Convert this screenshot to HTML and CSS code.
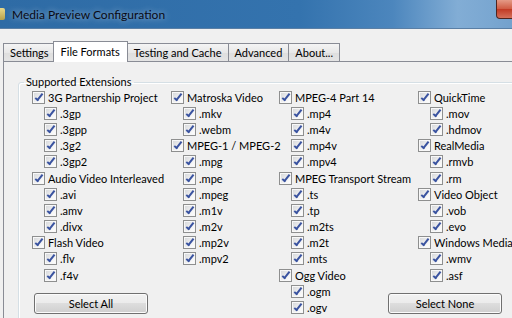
FILE: index.html
```html
<!DOCTYPE html>
<html lang="en">
<head>
  <meta charset="UTF-8">
  <title>Media Preview Configuration</title>
  <link rel="stylesheet" href="styles.css">
</head>
<body>

  <div class="window">
    <div class="titlebar">
      <span class="app-icon"></span>
      <span class="title">Media Preview Configuration</span>
      <span class="close"></span>
    </div>

    <div class="client">
      <div class="tabs">
        <div class="tab tab-settings">Settings</div>
        <div class="tab active">File Formats</div>
        <div class="tab">Testing and Cache</div>
        <div class="tab">Advanced</div>
        <div class="tab">About...</div>
      </div>

      <div class="panel">
        <fieldset class="group">
          <legend>Supported Extensions</legend>
          <div class="columns">
            <div class="col">
              <div class="item"><span class="box"></span>3G Partnership Project</div>
              <div class="item child"><span class="box"></span>.3gp</div>
              <div class="item child"><span class="box"></span>.3gpp</div>
              <div class="item child"><span class="box"></span>.3g2</div>
              <div class="item child"><span class="box"></span>.3gp2</div>
              <div class="item"><span class="box"></span>Audio Video Interleaved</div>
              <div class="item child"><span class="box"></span>.avi</div>
              <div class="item child"><span class="box"></span>.amv</div>
              <div class="item child"><span class="box"></span>.divx</div>
              <div class="item"><span class="box"></span>Flash Video</div>
              <div class="item child"><span class="box"></span>.flv</div>
              <div class="item child"><span class="box"></span>.f4v</div>
              <button class="btn btn-all">Select All</button>
            </div>
            <div class="col">
              <div class="item"><span class="box"></span>Matroska Video</div>
              <div class="item child"><span class="box"></span>.mkv</div>
              <div class="item child"><span class="box"></span>.webm</div>
              <div class="item"><span class="box"></span>MPEG-1 / MPEG-2</div>
              <div class="item child"><span class="box"></span>.mpg</div>
              <div class="item child"><span class="box"></span>.mpe</div>
              <div class="item child"><span class="box"></span>.mpeg</div>
              <div class="item child"><span class="box"></span>.m1v</div>
              <div class="item child"><span class="box"></span>.m2v</div>
              <div class="item child"><span class="box"></span>.mp2v</div>
              <div class="item child"><span class="box"></span>.mpv2</div>
            </div>
            <div class="col">
              <div class="item"><span class="box"></span>MPEG-4 Part 14</div>
              <div class="item child"><span class="box"></span>.mp4</div>
              <div class="item child"><span class="box"></span>.m4v</div>
              <div class="item child"><span class="box"></span>.mp4v</div>
              <div class="item child"><span class="box"></span>.mpv4</div>
              <div class="item"><span class="box"></span>MPEG Transport Stream</div>
              <div class="item child"><span class="box"></span>.ts</div>
              <div class="item child"><span class="box"></span>.tp</div>
              <div class="item child"><span class="box"></span>.m2ts</div>
              <div class="item child"><span class="box"></span>.m2t</div>
              <div class="item child"><span class="box"></span>.mts</div>
              <div class="item"><span class="box"></span>Ogg Video</div>
              <div class="item child"><span class="box"></span>.ogm</div>
              <div class="item child"><span class="box"></span>.ogv</div>
            </div>
            <div class="col">
              <div class="item"><span class="box"></span>QuickTime</div>
              <div class="item child"><span class="box"></span>.mov</div>
              <div class="item child"><span class="box"></span>.hdmov</div>
              <div class="item"><span class="box"></span>RealMedia</div>
              <div class="item child"><span class="box"></span>.rmvb</div>
              <div class="item child"><span class="box"></span>.rm</div>
              <div class="item"><span class="box"></span>Video Object</div>
              <div class="item child"><span class="box"></span>.vob</div>
              <div class="item child"><span class="box"></span>.evo</div>
              <div class="item"><span class="box"></span>Windows Media</div>
              <div class="item child"><span class="box"></span>.wmv</div>
              <div class="item child"><span class="box"></span>.asf</div>
              <button class="btn btn-none">Select None</button>
            </div>
          </div>
        </fieldset>
      </div>
    </div>
  </div>

</body>
</html>
```

FILE: styles.css
```css
body {
  margin: 0;
  overflow: hidden;
  background: #f0f0f0;
  font-family: Lato, "Open Sans", sans-serif;
  font-size: 11px;
  color: #000;
}
.window {
  width: 545px;
}
.titlebar {
  display: flex;
  align-items: center;
  height: 28px;
  border-bottom: 1px solid #5a7fa5;
  background: linear-gradient(90deg, #2e6ba5 0%, #3473ae 55%, #4c86bd 72%, #82add5 84%, #7aa7d1 90%, #6998c6 100%);
}
.app-icon {
  width: 16px;
  height: 12px;
  margin-left: -11px;
  border-radius: 2px;
  background: linear-gradient(#e9d98a, #b7a04a);
}
.title {
  margin-left: 7px;
  font-size: 12px;
  color: #0a0a14;
  text-shadow: 0 0 6px rgba(255, 255, 255, 0.6);
}
.close {
  align-self: flex-start;
  margin-left: auto;
  margin-right: 4px;
  width: 43px;
  height: 18px;
  border: 1px solid #4e2520;
  border-top: 0;
  border-radius: 0 0 4px 4px;
  background: linear-gradient(#e49a86, #cf5a42 50%, #c13a24 51%, #d5705a);
}
.client {
  padding-left: 3px;
}
.tabs {
  display: flex;
  align-items: flex-end;
  height: 20px;
  margin-top: 12px;
}
.tab {
  position: relative;
  height: 17px;
  line-height: 17px;
  padding: 0 6px;
  margin-right: -1px;
  border: 1px solid #898c95;
  border-bottom: 0;
  background: linear-gradient(#f4f4f4, #e8e8e8 50%, #dedede 51%, #e4e4e4);
}
.tab.active {
  z-index: 1;
  height: 20px;
  line-height: 19px;
  margin: 0 -1px -1px -2px;
  padding: 0 7px;
  background: #fff;
}
.panel {
  border-top: 1px solid #898c95;
  border-left: 1px solid #898c95;
  padding: 13px 0 0 14px;
  height: 260px;
}
.group {
  margin: 0;
  padding: 0 0 0 13px;
  border: 1px solid #d5dfe5;
  border-radius: 3px;
  box-shadow: inset 1px 1px 0 #fff;
  height: 300px;
}
.group legend {
  line-height: 14px;
  padding: 0 2px;
  margin-left: -8px;
}
.columns {
  display: grid;
  grid-template-columns: 139px 108px 139px 90px;
}
.col {
  display: flex;
  flex-direction: column;
}
.item {
  display: flex;
  align-items: center;
  height: 16.2px;
  white-space: nowrap;
}
.item.child {
  padding-left: 12px;
}
.box {
  position: relative;
  flex: none;
  width: 11px;
  height: 11px;
  margin-right: 3px;
  border: 1px solid #8e8f8f;
  background: linear-gradient(135deg, #d4d6d9, #f6f6f6 70%, #fff);
  box-shadow: inset 0 0 0 1px #f8f8f8;
}
.box::after {
  content: "";
  position: absolute;
  left: 4px;
  top: 0;
  width: 2px;
  height: 7px;
  border: solid #3a53a0;
  border-width: 0 2px 2px 0;
  transform: rotate(38deg);
}
.btn {
  width: 114px;
  height: 21px;
  margin-top: 10px;
  padding: 0;
  font-family: inherit;
  font-size: 11px;
  color: #000;
  border: 1px solid #707070;
  border-radius: 3px;
  background: linear-gradient(#f2f2f2, #ebebeb 48%, #dddddd 50%, #cfcfcf);
  box-shadow: inset 0 0 0 1px #fbfbfb;
}
.btn-all {
  margin-left: 2px;
}
.btn-none {
  margin-left: -30px;
}
```
